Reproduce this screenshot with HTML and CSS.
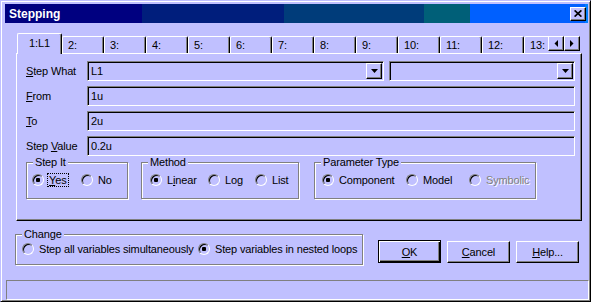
FILE: index.html
```html
<!DOCTYPE html>
<html lang="en">

<head>
    <meta charset="UTF-8">
    <meta name="viewport" content="width=device-width, initial-scale=1.0">
    <link rel="stylesheet" href="styles.css">
</head>

<body>
    <div class="window">
        <div class="titlebar">
            <span class="title">Stepping</span>
            <span class="close">
                <svg width="8" height="7" viewBox="0 0 8 7"><path d="M0.6 0.4l6.8 6.2M7.4 0.4l-6.8 6.2" stroke="#000" stroke-width="1.7" fill="none"/></svg>
            </span>
        </div>

        <!-- tab strip -->
        <div class="tabstrip">
            <div class="tabs">
                <div class="tab active">1:L1</div>
                <div class="tab">2:</div>
                <div class="tab">3:</div>
                <div class="tab">4:</div>
                <div class="tab">5:</div>
                <div class="tab">6:</div>
                <div class="tab">7:</div>
                <div class="tab">8:</div>
                <div class="tab">9:</div>
                <div class="tab">10:</div>
                <div class="tab">11:</div>
                <div class="tab">12:</div>
                <div class="tab">13:</div>
            </div>
            <div class="scroller">
                <span class="sbtn"><svg width="4" height="7" viewBox="0 0 4 7"><polygon points="4,0 4,7 0.5,3.5" fill="#000"/></svg></span>
                <span class="sbtn"><svg width="4" height="7" viewBox="0 0 4 7"><polygon points="0,0 0,7 3.5,3.5" fill="#000"/></svg></span>
            </div>
        </div>

        <div class="panel">
            <div class="row">
                <span class="lbl"><u>S</u>tep What</span>
                <div class="combo wide">
                    <span class="val">L1</span>
                    <span class="drop"><svg width="7" height="4" viewBox="0 0 7 4"><polygon points="0,0 7,0 3.5,4" fill="#000"/></svg></span>
                </div>
                <div class="combo narrow">
                    <span class="val"></span>
                    <span class="drop"><svg width="7" height="4" viewBox="0 0 7 4"><polygon points="0,0 7,0 3.5,4" fill="#000"/></svg></span>
                </div>
            </div>
            <div class="row">
                <span class="lbl"><u>F</u>rom</span>
                <div class="field">1u</div>
            </div>
            <div class="row">
                <span class="lbl"><u>T</u>o</span>
                <div class="field">2u</div>
            </div>
            <div class="row">
                <span class="lbl">Step <u>V</u>alue</span>
                <div class="field">0.2u</div>
            </div>

            <div class="groups">
                <div class="group step-it">
                    <span class="legend">Step It</span>
                    <div class="opts">
                        <span class="opt w-yes"><span class="radio on"></span><span class="focus"><u>Y</u>es</span></span>
                        <span class="opt"><span class="radio"></span>No</span>
                    </div>
                </div>
                <div class="group method">
                    <span class="legend">Method</span>
                    <div class="opts">
                        <span class="opt w-linear"><span class="radio on"></span>L<u>i</u>near</span>
                        <span class="opt w-log"><span class="radio"></span>Log</span>
                        <span class="opt"><span class="radio"></span>List</span>
                    </div>
                </div>
                <div class="group param">
                    <span class="legend">Parameter Type</span>
                    <div class="opts">
                        <span class="opt w-component"><span class="radio on"></span>Component</span>
                        <span class="opt w-model"><span class="radio"></span>Model</span>
                        <span class="opt disabled"><span class="radio"></span>Symbolic</span>
                    </div>
                </div>
            </div>
        </div>

        <div class="footer">
            <div class="group change">
                <span class="legend">Change</span>
                <div class="opts">
                    <span class="opt w-all"><span class="radio"></span>Step all variables simultaneously</span>
                    <span class="opt"><span class="radio on"></span>Step variables in nested loops</span>
                </div>
            </div>
            <div class="buttons">
                <span class="btn default"><u>O</u>K</span>
                <span class="btn"><u>C</u>ancel</span>
                <span class="btn"><u>H</u>elp...</span>
            </div>
        </div>

        <div class="status"></div>
    </div>
</body>

</html>
```

FILE: styles.css
```css
body {
    margin: 0;
    background: #c0c0ff;
    font-family: "Liberation Sans", Arial, sans-serif;
    font-size: 11px;
    letter-spacing: -0.15px;
    color: #000;
}

.window {
    width: 591px;
    height: 302px;
    box-sizing: border-box;
    border: 1px solid;
    border-color: #c0c0ff #000 #000 #c0c0ff;
    box-shadow: inset 1px 1px #fff, inset -1px -1px #808080;
    padding: 3px 2px 1px 4px;
    display: flex;
    flex-direction: column;
}

/* title bar */
.titlebar {
    height: 19px;
    flex: none;
    display: flex;
    align-items: center;
    justify-content: space-between;
    padding: 0 2px 0 4px;
    background: linear-gradient(to right,
        #000080 0 137px,
        #001e7c 137px 279px,
        #003c7a 279px 419px,
        #005f78 419px 465px,
        #0060ff 465px 580px,
        #0080ff 580px);
    color: #fff;
    font-weight: bold;
    font-size: 12px;
    letter-spacing: 0;
}

.close {
    width: 16px;
    height: 14px;
    box-sizing: border-box;
    display: flex;
    align-items: center;
    justify-content: center;
    background: #c0c0ff;
    border: 1px solid;
    border-color: #fff #000 #000 #fff;
    box-shadow: inset -1px -1px #808080;
}

/* tabs */
.tabstrip {
    display: flex;
    height: 21px;
    margin: 10px 0 -1px 12px;
    position: relative;
    z-index: 1;
}

.tabs {
    display: flex;
    align-items: flex-end;
    width: 531px;
    overflow: hidden;
}

.tab {
    flex: none;
    width: 42px;
    height: 17px;
    box-sizing: border-box;
    margin-bottom: 1px;
    border: 1px solid;
    border-bottom: none;
    border-color: #fff #000 #000 #fff;
    border-radius: 2px 2px 0 0;
    box-shadow: inset -1px 0 #808080;
    padding-left: 5px;
    line-height: 16px;
    background: #c0c0ff;
}

.tab.active {
    width: 45px;
    height: 21px;
    margin-bottom: 0;
    padding: 0;
    text-align: center;
    line-height: 18px;
}

.scroller {
    display: flex;
    align-self: flex-start;
    margin-top: 3px;
}

.sbtn {
    width: 16px;
    height: 15px;
    box-sizing: border-box;
    display: flex;
    align-items: center;
    justify-content: center;
    border: 1px solid;
    border-color: #fff #000 #000 #fff;
    box-shadow: inset -1px -1px #808080;
    background: #c0c0ff;
}

/* panel */
.panel {
    flex: none;
    height: 168px;
    box-sizing: border-box;
    margin: 0 6px 0 11px;
    border: 1px solid;
    border-color: #fff #000 #000 #fff;
    box-shadow: inset -1px -1px #808080;
    padding: 7px 6px 0 9px;
}

.row {
    display: flex;
    align-items: center;
    height: 20px;
    margin-bottom: 5px;
}

.lbl {
    flex: none;
    width: 61px;
}

.field,
.combo {
    height: 20px;
    box-sizing: border-box;
    border: 1px solid;
    border-color: #808080 #fff #fff #808080;
    box-shadow: inset 1px 1px #000;
}

.field {
    flex: 1;
    padding-left: 3px;
    line-height: 18px;
}

.combo {
    display: flex;
    flex: none;
}

.combo.wide {
    width: 297px;
    margin-right: 5px;
}

.combo.narrow {
    width: 186px;
}

.combo .val {
    flex: 1;
    padding-left: 3px;
    line-height: 18px;
}

.drop {
    width: 16px;
    height: 16px;
    margin: 1px;
    box-sizing: border-box;
    display: flex;
    align-items: center;
    justify-content: center;
    border: 1px solid;
    border-color: #fff #000 #000 #fff;
    box-shadow: inset -1px -1px #808080;
}

/* group boxes */
.groups {
    display: flex;
    margin-top: 6px;
}

.group {
    height: 37px;
    box-sizing: border-box;
    border: 1px solid #808080;
    box-shadow: inset 1px 1px #fff, 1px 1px #fff;
}

.legend {
    display: block;
    width: fit-content;
    margin: -7px 0 0 6px;
    padding: 0 2px;
    line-height: 13px;
    background: #c0c0ff;
}

.step-it {
    width: 102px;
}

.method {
    width: 158px;
    margin-left: 13px;
}

.param {
    width: 222px;
    margin-left: 15px;
}

.opts {
    display: flex;
    align-items: center;
    height: 14px;
    margin-top: 4px;
}

.step-it .opts {
    padding-left: 5px;
}

.method .opts {
    padding-left: 8px;
}

.param .opts {
    padding-left: 7px;
}

.opt {
    display: flex;
    align-items: center;
    flex: none;
    white-space: nowrap;
}

.w-yes { width: 49px; }
.w-linear { width: 58px; }
.w-log { width: 47px; }
.w-component { width: 84px; }
.w-model { width: 63px; }
.w-all { width: 176px; }

.radio {
    flex: none;
    width: 12px;
    height: 12px;
    box-sizing: border-box;
    margin-right: 5px;
    border-radius: 50%;
    border: 1px solid;
    border-color: #808080 #fff #fff #808080;
    box-shadow: inset 1px 1px #000;
}

.radio.on::after {
    content: "";
    display: block;
    width: 4px;
    height: 4px;
    margin: 3px;
    border-radius: 1px;
    background: #000;
}

.focus {
    outline: 1px dotted #000;
    padding: 0 1px;
    margin-left: -1px;
}

.disabled {
    color: #808080;
    text-shadow: 1px 1px #fff;
}

/* footer */
.footer {
    display: flex;
    margin: 13px 0 0 10px;
}

.change {
    width: 348px;
    height: 31px;
}

.change .opts {
    margin-top: 1px;
    padding-left: 6px;
}

.buttons {
    display: flex;
    margin: 6px 0 0 15px;
}

.btn {
    width: 63px;
    height: 22px;
    box-sizing: border-box;
    margin: 1px 6px 0 0;
    display: flex;
    align-items: center;
    justify-content: center;
    border: 1px solid;
    border-color: #fff #000 #000 #fff;
    box-shadow: inset -1px -1px #808080;
}

.btn.default {
    height: 23px;
    margin-top: 0;
    border-color: #000;
    box-shadow: inset 1px 1px #fff, inset -1px -1px #000, inset -2px -2px #808080;
}

.status {
    margin: auto -1px 0 1px;
    height: 20px;
    box-sizing: border-box;
    border: 1px solid;
    border-color: #808080 #fff #fff #808080;
}
```
